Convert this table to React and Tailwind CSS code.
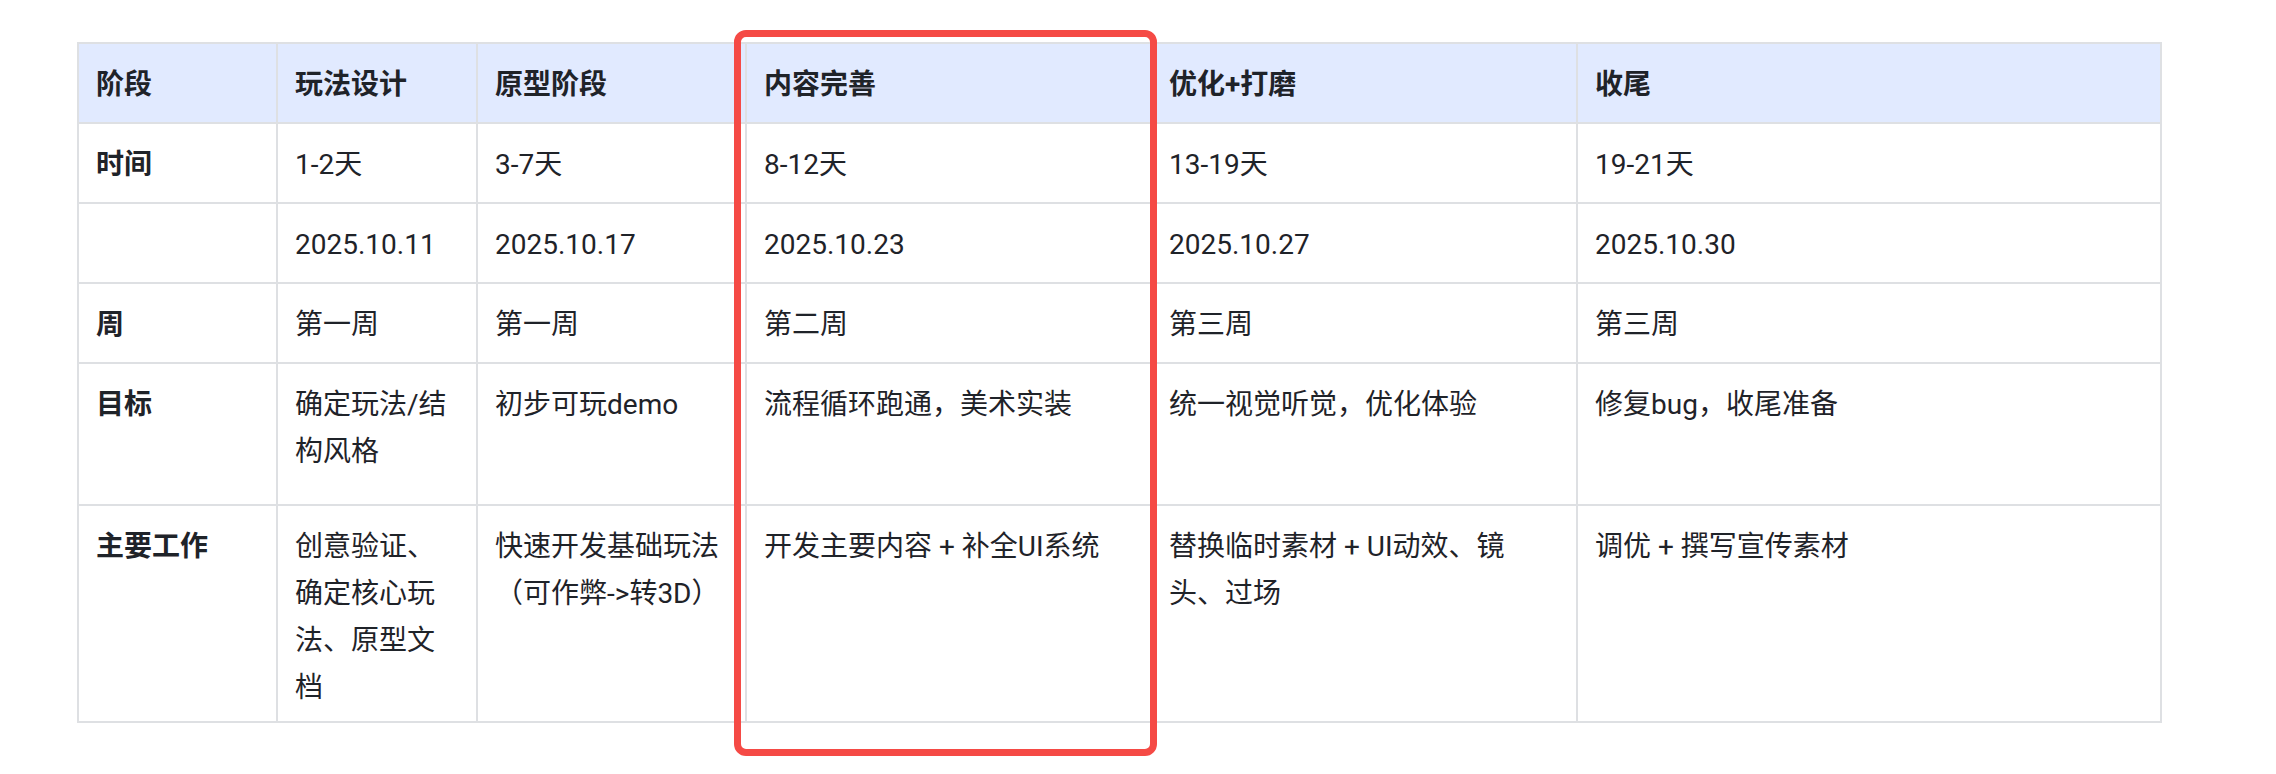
const header = ["阶段", "玩法设计", "原型阶段", "内容完善", "优化+打磨", "收尾"];

const rows = [
  { label: "时间", h: "h-[78px]", cells: ["1-2天", "3-7天", "8-12天", "13-19天", "19-21天"] },
  { label: "", h: "h-[78px]", cells: ["2025.10.11", "2025.10.17", "2025.10.23", "2025.10.27", "2025.10.30"] },
  { label: "周", h: "h-[78px]", cells: ["第一周", "第一周", "第二周", "第三周", "第三周"] },
  {
    label: "目标",
    h: "h-[140px]",
    cells: ["确定玩法/结构风格", "初步可玩demo", "流程循环跑通，美术实装", "统一视觉听觉，优化体验", "修复bug，收尾准备"],
  },
  {
    label: "主要工作",
    h: "h-[215px]",
    cells: [
      "创意验证、确定核心玩法、原型文档",
      "快速开发基础玩法（可作弊->转3D）",
      "开发主要内容 + 补全UI系统",
      "替换临时素材 + UI动效、镜头、过场",
      "调优 + 撰写宣传素材",
    ],
  },
];

const Cell = ({ children, bold, head, h }) => {
  return (
    <div
      className={`${h} px-[17px] pt-[17px] break-all ${head ? "bg-[#e1eaff]" : "bg-white"} ${
        bold ? "font-bold" : "font-normal"
      }`}
    >
      {children}
    </div>
  );
};

const App = () => {
  return (
    <div
      className="w-[2276px] h-[774px] bg-white overflow-hidden text-[28px] leading-[47px] text-[#1f2329]"
      style={{ fontFamily: 'Roboto, "Noto Sans CJK SC", sans-serif' }}
    >
      <div className="relative ml-[77px] mt-[42px] w-fit">
        <div className="grid grid-cols-[197px_198px_267px_403px_424px_582px] gap-[2px] p-[2px] bg-[#dee0e3]">
          {header.map((t, i) => (
            <Cell key={i} head bold h="h-[78px]">
              {t}
            </Cell>
          ))}
          {rows.map((row, r) => (
            <>
              <Cell key={`l${r}`} bold h={row.h}>
                {row.label}
              </Cell>
              {row.cells.map((c, i) => (
                <Cell key={`${r}-${i}`} h={row.h}>
                  {c}
                </Cell>
              ))}
            </>
          ))}
        </div>
        {/* highlight box drawn over the 内容完善 column */}
        <div className="absolute left-[657px] top-[-12px] w-[423px] h-[726px] rounded-[12px] border-[7px] border-[#f54a45] pointer-events-none" />
      </div>
    </div>
  );
};

export default App;
